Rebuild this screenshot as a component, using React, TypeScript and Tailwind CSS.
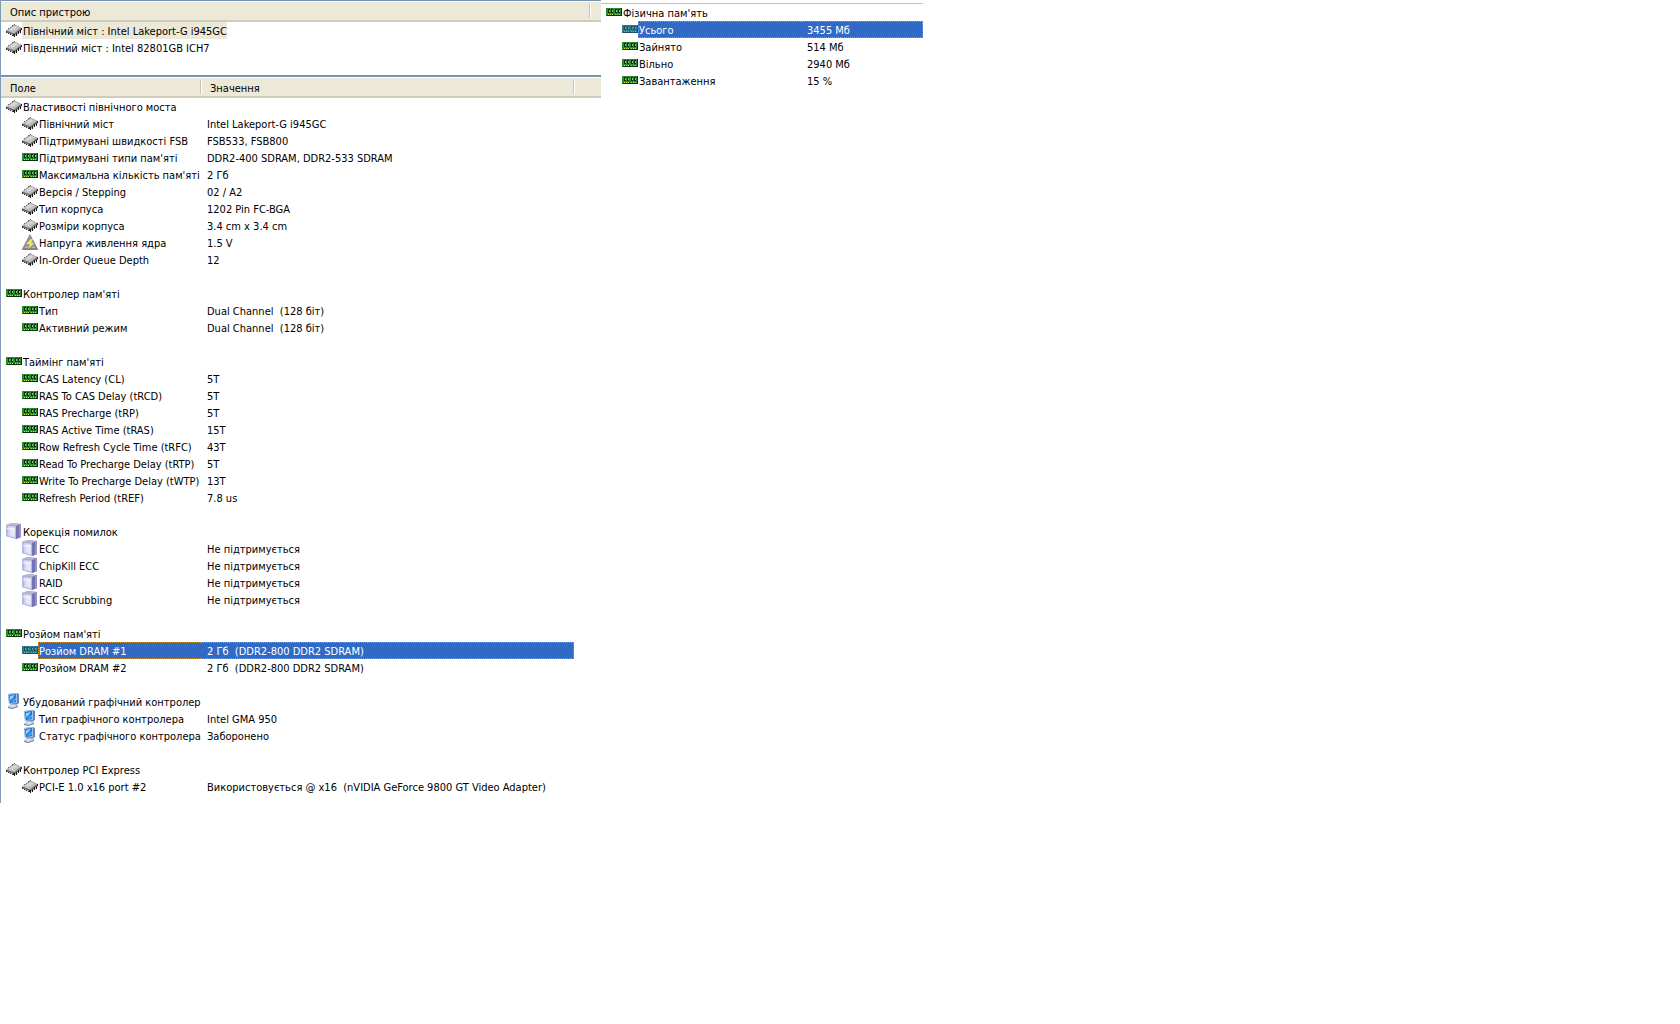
import type { ReactNode } from "react";

type IconName = "chip" | "ram" | "volt" | "server" | "monitor";

type Row = {
  icon: IconName;
  label: string;
  value?: string;
  selected?: boolean;
};

type Section = Row & { rows: Row[] };

function ChipIcon() {
  return (
    <>
      <path d="M2 6h1v1H2zM4 5h1v1H4zM6 3h1v1H6zM8 2h1v1H8z" fill="#6a6a6a" />
      <path d="M0 9L8 2.500L15.500 6v2L8.500 13.500L0 10.500z" fill="#6e6e6e" />
      <path d="M0.500 8.500L8.500 3L15 6L8 11.500z" fill="#bdbdbd" />
      <path d="M3 7.500L8.500 4L12 5.500L6 9z" fill="#d6d6d6" />
      <path d="M0 9h1v2H0zM2 11h1v1H2zM4 12h1v1H4zM6 13h1v1H6z" fill="#3a3a3a" />
      <path d="M8 12h1v3H8zM10 11h1v3h-1zM12 9h1v3h-1zM14 8h1v3h-1z" fill="#1c1c1c" />
      <path d="M9 13h1v1H9zM11 11h1v2h-1zM13 10h1v1h-1zM15 8h1v1h-1z" fill="#d9d9d9" />
      <path d="M15 6h1v2h-1zM7 12h1v2H7z" fill="#2b2b2b" />
    </>
  );
}

function RamIcon({ tinted }: { tinted?: boolean }) {
  const board = tinted ? "#2b7c86" : "#2a8a2e";
  const edge = tinted ? "#1f4f6d" : "#0a300d";
  const chip = tinted ? "#1d4f66" : "#0c2c10";
  const light = tinted ? "#5f9fae" : "#8fbf7a";
  const pin = tinted ? "#6fb0b0" : "#c8e03c";
  return (
    <>
      <path d="M0 4h16v8H0z" fill={board} />
      <path d="M15 4h1v8h-1z" fill={edge} />
      <path d="M2 5h2v4H2zM5 5h2v4H5zM9 5h2v4H9zM12 5h2v4h-2z" fill={chip} />
      <path d="M3 6h1v2H3zM6 6h1v2H6zM10 6h1v2h-1zM13 6h1v2h-1z" fill={light} />
      <path d="M1 11h6v1H1zM8 11h7v1H8z" fill={edge} />
      <path d="M2 10h1v1H2zM4 10h1v1H4zM6 10h1v1H6zM9 10h1v1H9zM11 10h1v1h-1zM13 10h1v1h-1z" fill={pin} />
      <path d="M7 10h1v2H7z" fill={edge} />
    </>
  );
}

function VoltIcon() {
  return (
    <>
      <path d="M8 0L0 15v1h16v-1z" fill="#858585" />
      <path d="M8 2L2 14h12z" fill="#9b9b95" />
      <path d="M9 5L4 10h4l-2 5 6-6H9l2-4z" fill="#f0ec62" />
      <path d="M3 13h3v1H3zM10 13h3v1h-3z" fill="#bdbb75" />
    </>
  );
}

function ServerIcon() {
  return (
    <>
      <path d="M0 2l6-2 9 1v13l-5 2-10-3z" fill="#8f8cc4" />
      <path d="M0 2l6-2 9 1-5 2z" fill="#b9b9c9" />
      <path d="M0 2l10 1v13L0 13z" fill="#b9b8e4" />
      <path d="M2 3l7 1v11l-7-2z" fill="#d3d2f2" />
      <path d="M4 4l5 1v9l-5-2z" fill="#e6e6fb" />
      <path d="M1 5l8 1v1L1 6z" fill="#f8f8ff" />
      <path d="M10 3l5-2v13l-5 2z" fill="#7572b4" />
      <path d="M13 2l2-1v13l-2 1z" fill="#9593ca" />
    </>
  );
}

function MonitorIcon() {
  return (
    <>
      <path d="M2 1l9-1 2 1v9l-3 2-7-1z" fill="#5c86bb" />
      <path d="M2 1l9-1v10l-8 1z" fill="#9fbfe4" />
      <path d="M3 2l7-1v8l-6 1z" fill="#2272cf" />
      <path d="M4 3l5-1-3 4-2 1z" fill="#8fd0ff" />
      <path d="M5 8l5-4v4l-4 1z" fill="#38a5ee" />
      <path d="M5 11h5v2H5z" fill="#8794ad" />
      <path d="M2 13l5-2 5 1v2l-6 2-4-1z" fill="#bcc6da" />
      <path d="M2 14l4 1 6-2v1l-6 2-4-1z" fill="#7a88a4" />
      <path d="M4 13l4-1 2 1-4 1z" fill="#eef2fa" />
    </>
  );
}

function Icon({ name, tinted }: { name: IconName; tinted?: boolean }) {
  const drawings: Record<IconName, ReactNode> = {
    chip: <ChipIcon />,
    ram: <RamIcon tinted={tinted} />,
    volt: <VoltIcon />,
    server: <ServerIcon />,
    monitor: <MonitorIcon />,
  };
  return (
    <svg viewBox="0 0 16 16" className="size-4 shrink-0" aria-hidden="true">
      {drawings[name]}
    </svg>
  );
}

const sections: Section[] = [
  {
    icon: "chip",
    label: "Властивості північного моста",
    rows: [
      { icon: "chip", label: "Північний міст", value: "Intel Lakeport-G i945GC" },
      { icon: "chip", label: "Підтримувані швидкості FSB", value: "FSB533, FSB800" },
      { icon: "ram", label: "Підтримувані типи пам'яті", value: "DDR2-400 SDRAM, DDR2-533 SDRAM" },
      { icon: "ram", label: "Максимальна кількість пам'яті", value: "2 Гб" },
      { icon: "chip", label: "Версія / Stepping", value: "02 / A2" },
      { icon: "chip", label: "Тип корпуса", value: "1202 Pin FC-BGA" },
      { icon: "chip", label: "Розміри корпуса", value: "3.4 cm x 3.4 cm" },
      { icon: "volt", label: "Напруга живлення ядра", value: "1.5 V" },
      { icon: "chip", label: "In-Order Queue Depth", value: "12" },
    ],
  },
  {
    icon: "ram",
    label: "Контролер пам'яті",
    rows: [
      { icon: "ram", label: "Тип", value: "Dual Channel  (128 біт)" },
      { icon: "ram", label: "Активний режим", value: "Dual Channel  (128 біт)" },
    ],
  },
  {
    icon: "ram",
    label: "Таймінг пам'яті",
    rows: [
      { icon: "ram", label: "CAS Latency (CL)", value: "5T" },
      { icon: "ram", label: "RAS To CAS Delay (tRCD)", value: "5T" },
      { icon: "ram", label: "RAS Precharge (tRP)", value: "5T" },
      { icon: "ram", label: "RAS Active Time (tRAS)", value: "15T" },
      { icon: "ram", label: "Row Refresh Cycle Time (tRFC)", value: "43T" },
      { icon: "ram", label: "Read To Precharge Delay (tRTP)", value: "5T" },
      { icon: "ram", label: "Write To Precharge Delay (tWTP)", value: "13T" },
      { icon: "ram", label: "Refresh Period (tREF)", value: "7.8 us" },
    ],
  },
  {
    icon: "server",
    label: "Корекція помилок",
    rows: [
      { icon: "server", label: "ECC", value: "Не підтримується" },
      { icon: "server", label: "ChipKill ECC", value: "Не підтримується" },
      { icon: "server", label: "RAID", value: "Не підтримується" },
      { icon: "server", label: "ECC Scrubbing", value: "Не підтримується" },
    ],
  },
  {
    icon: "ram",
    label: "Розйом пам'яті",
    rows: [
      { icon: "ram", label: "Розйом DRAM #1", value: "2 Гб  (DDR2-800 DDR2 SDRAM)", selected: true },
      { icon: "ram", label: "Розйом DRAM #2", value: "2 Гб  (DDR2-800 DDR2 SDRAM)" },
    ],
  },
  {
    icon: "monitor",
    label: "Убудований графічний контролер",
    rows: [
      { icon: "monitor", label: "Тип графічного контролера", value: "Intel GMA 950" },
      { icon: "monitor", label: "Статус графічного контролера", value: "Заборонено" },
    ],
  },
  {
    icon: "chip",
    label: "Контролер PCI Express",
    rows: [
      {
        icon: "chip",
        label: "PCI-E 1.0 x16 port #2",
        value: "Використовується @ x16  (nVIDIA GeForce 9800 GT Video Adapter)",
      },
    ],
  },
];

const physicalMemory: Section = {
  icon: "ram",
  label: "Фізична пам'ять",
  rows: [
    { icon: "ram", label: "Усього", value: "3455 Мб", selected: true },
    { icon: "ram", label: "Зайнято", value: "514 Мб" },
    { icon: "ram", label: "Вільно", value: "2940 Мб" },
    { icon: "ram", label: "Завантаження", value: "15 %" },
  ],
};

function HeaderCell({ children, last }: { children?: ReactNode; last?: boolean }) {
  return (
    <th scope="col" className="p-0 text-left font-normal">
      <div className="flex h-[21px] items-center border-t border-b-2 border-t-white border-b-[#cfccbb] bg-[#ece9d8]">
        <div
          className={
            last
              ? "h-[14px] flex-1"
              : "h-[14px] flex-1 border-r border-[#c7c5b2] pl-[9px] shadow-[1px_0_0_#ffffff]"
          }
        >
          {children}
        </div>
      </div>
    </th>
  );
}

function SectionBody({ section, spaced }: { section: Section; spaced?: boolean }) {
  return (
    <tbody>
      <tr>
        <th scope="rowgroup" colSpan={2} className="p-0 text-left font-normal">
          <div className="flex h-[17px] items-start gap-px pl-[5px]">
            <Icon name={section.icon} />
            <span className="pt-px">{section.label}</span>
          </div>
        </th>
      </tr>
      {section.rows.map((row) => (
        <tr key={row.label} className={row.selected ? "text-white" : ""}>
          <th scope="row" className="p-0 text-left font-normal">
            <div className="flex h-[17px] items-start pl-[21px]">
              <Icon name={row.icon} tinted={row.selected} />
              <span
                className={
                  row.selected
                    ? "h-[17px] flex-1 border-y border-l border-dotted border-[#ce953a] bg-[#316ac5]"
                    : "h-[17px] flex-1 pt-px pl-px"
                }
              >
                {row.label}
              </span>
            </div>
          </th>
          <td className="p-0">
            <div
              className={
                row.selected
                  ? "h-[17px] border-y border-r border-dotted border-[#ce953a] bg-[#316ac5] pl-[6px] whitespace-pre"
                  : "h-[17px] pt-px pl-[6px] whitespace-pre"
              }
            >
              {row.value}
            </div>
          </td>
        </tr>
      ))}
      {spaced && (
        <tr className="h-[17px]" aria-hidden="true">
          <td colSpan={2} className="p-0" />
        </tr>
      )}
    </tbody>
  );
}

function DeviceList() {
  return (
    <table className="w-full table-fixed border-separate border-spacing-0">
      <colgroup>
        <col />
        <col className="w-[11px]" />
      </colgroup>
      <thead>
        <tr>
          <HeaderCell>Опис пристрою</HeaderCell>
          <HeaderCell last />
        </tr>
      </thead>
      <tbody>
        <tr>
          <td className="p-0">
            <div className="flex h-[17px] items-start pl-[5px]">
              <Icon name="chip" />
              <span className="h-[17px] bg-[#ece9d8] pt-px pl-px">
                Північний міст : Intel Lakeport-G i945GC
              </span>
            </div>
          </td>
        </tr>
        <tr>
          <td className="p-0">
            <div className="flex h-[17px] items-start gap-px pl-[5px]">
              <Icon name="chip" />
              <span className="pt-px">Південний міст : Intel 82801GB ICH7</span>
            </div>
          </td>
        </tr>
      </tbody>
    </table>
  );
}

function PropertyTable() {
  return (
    <table className="w-full table-fixed border-separate border-spacing-0">
      <colgroup>
        <col className="w-[200px]" />
        <col />
        <col className="w-[27px]" />
      </colgroup>
      <thead>
        <tr>
          <HeaderCell>Поле</HeaderCell>
          <HeaderCell>Значення</HeaderCell>
          <HeaderCell last />
        </tr>
      </thead>
      {sections.map((section, index) => (
        <SectionBody key={section.label} section={section} spaced={index < sections.length - 1} />
      ))}
    </table>
  );
}

export default function App() {
  return (
    <main className="flex min-h-screen items-start bg-white font-['DejaVu_Sans_Condensed','DejaVu_Sans',sans-serif] text-[11px] leading-[17px] whitespace-nowrap text-black">
      <div className="max-w-[601px] flex-1 border-l border-[#7f9db9]">
        <section className="border-t border-[#7b93b3] pb-[19px]">
          <DeviceList />
        </section>
        <section className="border-t-2 border-[#7b93b3] pb-2">
          <PropertyTable />
        </section>
      </div>
      <section className="mt-[3px] max-w-[322px] flex-1 border-t border-[#c0c0c0]">
        <table className="w-full table-fixed border-separate border-spacing-0">
          <colgroup>
            <col className="w-[200px]" />
            <col />
          </colgroup>
          <SectionBody section={physicalMemory} />
        </table>
      </section>
    </main>
  );
}
